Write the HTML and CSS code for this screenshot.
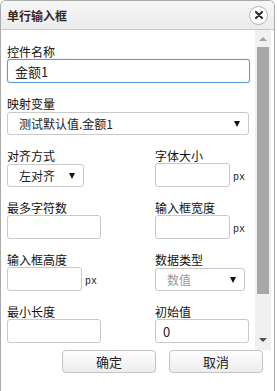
FILE: index.html
```html
<!DOCTYPE html>
<html lang="zh-CN">
<head>
  <meta charset="UTF-8">
  <title>单行输入框</title>
  <link rel="stylesheet" href="styles.css">
</head>
<body>
  <div class="dialog">
    <div class="dialog-header">
      <span class="dialog-title">单行输入框</span>
      <span class="close-btn">
        <svg width="10" height="10" viewBox="0 0 10 10"><path d="M2 2 L8 8 M8 2 L2 8" stroke="#333" stroke-width="2.2" stroke-linecap="round"/></svg>
      </span>
    </div>
    <div class="dialog-body">
      <div class="form-area">
        <div class="field full">
          <label>控件名称</label>
          <div class="control"><input class="input focused" style="width:243px" type="text" value="金额1"></div>
        </div>
        <div class="field full">
          <label>映射变量</label>
          <div class="control"><div class="select" style="width:242px"><span>测试默认值.金额1</span><i class="caret"></i></div></div>
        </div>
        <div class="field">
          <label>对齐方式</label>
          <div class="control"><div class="select" style="width:77px"><span>左对齐</span><i class="caret"></i></div></div>
        </div>
        <div class="field">
          <label>字体大小</label>
          <div class="control"><input class="input" style="width:75px" type="text"><span class="unit">px</span></div>
        </div>
        <div class="field">
          <label>最多字符数</label>
          <div class="control"><input class="input" style="width:94px" type="text"></div>
        </div>
        <div class="field">
          <label>输入框宽度</label>
          <div class="control"><input class="input" style="width:75px" type="text"><span class="unit">px</span></div>
        </div>
        <div class="field">
          <label>输入框高度</label>
          <div class="control"><input class="input" style="width:75px" type="text"><span class="unit">px</span></div>
        </div>
        <div class="field">
          <label>数据类型</label>
          <div class="control"><div class="select" style="width:90px"><span class="placeholder">数值</span><i class="caret"></i></div></div>
        </div>
        <div class="field">
          <label>最小长度</label>
          <div class="control"><input class="input" style="width:94px" type="text"></div>
        </div>
        <div class="field">
          <label>初始值</label>
          <div class="control"><input class="input" style="width:94px" type="text" value="0"></div>
        </div>
      </div>
      <div class="scrollbar">
        <i class="arrow up"></i>
        <div class="thumb"></div>
        <i class="arrow down"></i>
      </div>
    </div>
    <div class="dialog-footer">
      <button class="btn">确定</button>
      <button class="btn">取消</button>
    </div>
  </div>
</body>
</html>
```

FILE: styles.css
```css
body {
  margin: 0;
  background: #fff;
  font-family: "Noto Sans CJK SC", "Liberation Sans", sans-serif;
  color: #222;
}
.dialog {
  width: 273px;
  height: 390px;
  border: 1px solid #aaa;
  border-bottom: none;
  border-radius: 6px 6px 0 0;
  overflow: hidden;
  background: #fff;
}
.dialog-header {
  height: 28px;
  border-bottom: 1px solid #c8c8c8;
  background: linear-gradient(#f6f6f6, #ececec);
  display: flex;
  align-items: center;
  justify-content: space-between;
  padding: 0 6px 0 6px;
}
.dialog-title {
  font-size: 12px;
  font-weight: bold;
  color: #3a2626;
}
.close-btn {
  width: 17px;
  height: 17px;
  border: 1px solid #b5b5b5;
  border-radius: 50%;
  background: #fff;
  display: flex;
  align-items: center;
  justify-content: center;
}
.dialog-body {
  display: flex;
  height: 320px;
}
.form-area {
  flex: 1;
  padding: 14px 0 0 6px;
  display: grid;
  grid-template-columns: 148px 1fr;
  grid-auto-rows: 39px;
  row-gap: 13px;
  align-content: start;
  overflow: hidden;
}
.field.full {
  grid-column: 1 / 3;
}
.field label {
  display: block;
  height: 15px;
  line-height: 15px;
  font-size: 12px;
  color: #111;
}
.control {
  display: flex;
  align-items: flex-end;
  height: 24px;
}
.input {
  box-sizing: border-box;
  height: 24px;
  border: 1px solid #c9c9c9;
  border-radius: 3px;
  padding: 0 7px;
  font-family: inherit;
  font-size: 13px;
  color: #222;
  outline: none;
}
.input.focused {
  border-color: #5d9ad8;
  box-shadow: 0 0 1px #7fb2e5;
}
.unit {
  font-family: "Liberation Mono", monospace;
  font-size: 10px;
  margin: 0 0 4px 3px;
  color: #222;
}
.select {
  box-sizing: border-box;
  height: 23px;
  border: 1px solid #c9c9c9;
  border-radius: 3px;
  display: flex;
  align-items: center;
  justify-content: space-between;
  padding: 0 8px 0 11px;
  font-size: 12px;
  color: #222;
}
.select .placeholder {
  color: #999;
}
.caret {
  width: 0;
  height: 0;
  border-left: 3px solid transparent;
  border-right: 3px solid transparent;
  border-top: 6px solid #111;
}
.scrollbar {
  width: 16px;
  margin-right: 3px;
  background: #f0f0f0;
  display: flex;
  flex-direction: column;
  align-items: center;
}
.arrow {
  width: 0;
  height: 0;
  border-left: 4px solid transparent;
  border-right: 4px solid transparent;
}
.arrow.up {
  border-bottom: 4px solid #a3a3a3;
  margin: 7px 0 6px;
}
.arrow.down {
  border-top: 4px solid #505050;
  margin: 0 0 7px;
}
.thumb {
  width: 12px;
  height: 247px;
  background: #a8a8a8;
  margin-bottom: 44px;
}
.dialog-footer {
  display: flex;
  justify-content: flex-end;
  gap: 13px;
  padding: 0 11px 0 0;
}
.btn {
  width: 94px;
  height: 23px;
  border: 1px solid #c3c3c3;
  border-radius: 4px;
  background: linear-gradient(#ffffff, #ececec);
  font-family: inherit;
  font-size: 13px;
  color: #222;
  padding: 0;
}
```
